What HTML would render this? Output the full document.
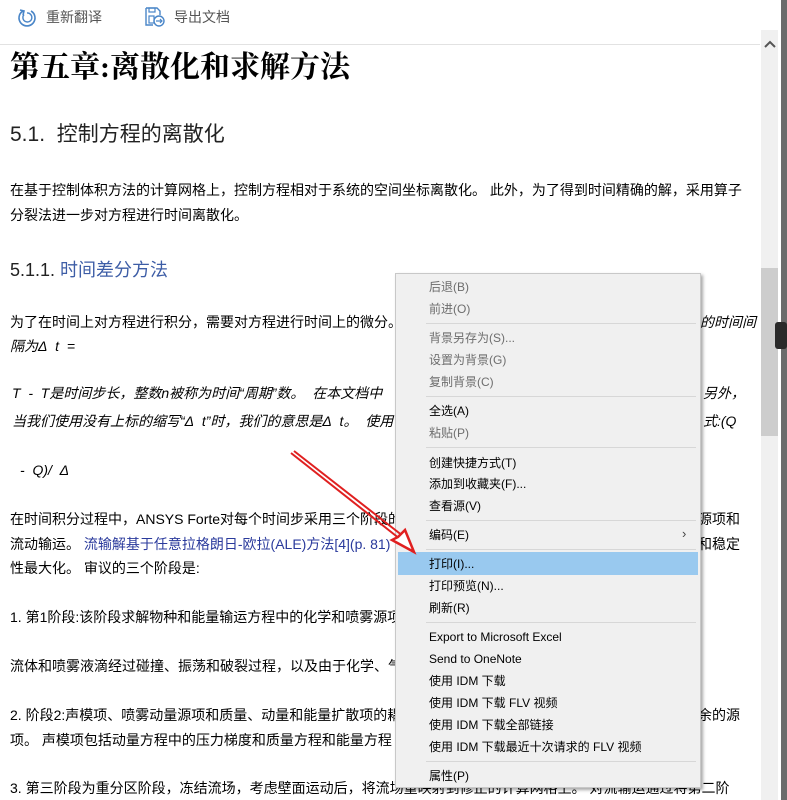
<!DOCTYPE html>
<html><head><meta charset="utf-8"><style>
*{margin:0;padding:0;box-sizing:border-box}
body{width:787px;height:800px;overflow:hidden;background:#fff;position:relative;font-family:"Liberation Sans","Noto Sans CJK SC",sans-serif;color:#000}
.a{position:absolute;white-space:nowrap;line-height:1}
.t{font-size:14px}
.i{font-style:italic;font-size:14px}
.bl{color:#2a3a9c}
#tb{position:absolute;left:0;top:0;width:760px;height:45px;border-bottom:1px solid #e2e2e2}
#sb{position:absolute;left:761px;top:30px;width:17px;height:770px;background:#f0f0f0}
#th{position:absolute;left:761px;top:268px;width:17px;height:168px;background:#cdcdcd}
#dk{position:absolute;left:781px;top:0;width:6px;height:800px;background:#6b6b6b}
#menu{position:absolute;left:395px;top:273px;width:306px;height:515px;background:#f0f0f0;border:1px solid #c8c8c8;box-shadow:2px 2px 3px rgba(0,0,0,.35);font-size:12px}
#menu .m{position:absolute;left:33px;white-space:nowrap;line-height:1;color:#000}
#menu .g{color:#6d6d6d}
#menu .s{position:absolute;left:30px;right:4px;height:1px;background:#d7d7d7}
#hl{position:absolute;left:2px;top:278px;width:300px;height:23px;background:#99c9ef}
</style></head><body>
<div id="tb"></div>
<svg class="a" style="left:16px;top:6px" width="22" height="22" viewBox="0 0 22 22"><path d="M7 5 A8 8 0 1 0 15 5" fill="none" stroke="#4a86c8" stroke-width="1.6"/><path d="M11 7 A4.5 4.5 0 1 1 8 8.5" fill="none" stroke="#4a86c8" stroke-width="1.4"/><path d="M4 4 L8 5 L7 9" fill="none" stroke="#4a86c8" stroke-width="1.6"/></svg>
<div class="a" style="left:46px;top:10px;font-size:14px;color:#555">重新翻译</div>
<svg class="a" style="left:144px;top:7px" width="22" height="20" viewBox="0 0 22 20"><path d="M2 1 H13 L16 4 V8 M2 1 V18 H9" fill="none" stroke="#4a86c8" stroke-width="1.4"/><rect x="5" y="1" width="6" height="4" fill="none" stroke="#4a86c8" stroke-width="1.2"/><rect x="5" y="9" width="5" height="7" fill="none" stroke="#4a86c8" stroke-width="1.2"/><circle cx="15" cy="14" r="5" fill="none" stroke="#4a86c8" stroke-width="1.4"/><path d="M12 14 H18 M16 12 L18 14 L16 16" fill="none" stroke="#4a86c8" stroke-width="1.2"/></svg>
<div class="a" style="left:174px;top:10px;font-size:14px;color:#555">导出文档</div>

<div class="a" style="left:10px;top:53px;font-size:30px;font-weight:bold;font-family:'Liberation Serif','Noto Serif CJK SC',serif">第五章:离散化和求解方法</div>
<div class="a" style="left:10px;top:124px;font-size:21px;color:#222">5.1.&nbsp; 控制方程的离散化</div>
<div class="a t" style="left:10px;top:183px">在基于控制体积方法的计算网格上，控制方程相对于系统的空间坐标离散化。 此外，为了得到时间精确的解，采用算子</div>
<div class="a t" style="left:10px;top:208px">分裂法进一步对方程进行时间离散化。</div>
<div class="a" style="left:10px;top:261px;font-size:18px;color:#222">5.1.1. <span style="color:#3d5da6">时间差分方法</span></div>
<div class="a t" style="left:10px;top:315px">为了在时间上对方程进行积分，需要对方程进行时间上的微分。</div>
<div class="a i" style="left:700px;top:315px">的时间间</div>
<div class="a i" style="left:10px;top:339px">隔为Δ&nbsp; t&nbsp; =</div>
<div class="a i" style="left:12px;top:386px">T&nbsp; -&nbsp; T是时间步长，整数n被称为时间“周期”数。&nbsp; 在本文档中</div>
<div class="a i" style="left:703px;top:386px">另外，</div>
<div class="a i" style="left:12px;top:414px">当我们使用没有上标的缩写“Δ&nbsp; t”时，我们的意思是Δ&nbsp; t。&nbsp; 使用</div>
<div class="a i" style="left:703px;top:414px">式:(Q</div>
<div class="a i" style="left:20px;top:463px">-&nbsp; Q)/&nbsp; Δ</div>
<div class="a t" style="left:10px;top:512px">在时间积分过程中，ANSYS Forte对每个时间步采用三个阶段的</div>
<div class="a t" style="left:698px;top:512px">源项和</div>
<div class="a t" style="left:10px;top:537px">流动输运。 <span class="bl">流输解基于任意拉格朗日-欧拉(ALE)方法[4](p. 81)</span></div>
<div class="a t" style="left:698px;top:537px">和稳定</div>
<div class="a t" style="left:10px;top:561px">性最大化。 审议的三个阶段是:</div>
<div class="a t" style="left:10px;top:610px">1. 第1阶段:该阶段求解物种和能量输运方程中的化学和喷雾源项</div>
<div class="a t" style="left:10px;top:659px">流体和喷雾液滴经过碰撞、振荡和破裂过程，以及由于化学、气</div>
<div class="a t" style="left:10px;top:708px">2. 阶段2:声模项、喷雾动量源项和质量、动量和能量扩散项的耦</div>
<div class="a t" style="left:698px;top:708px">余的源</div>
<div class="a t" style="left:10px;top:733px">项。 声模项包括动量方程中的压力梯度和质量方程和能量方程</div>
<div class="a t" style="left:10px;top:781px">3. 第三阶段为重分区阶段，冻结流场，考虑壁面运动后，将流场重映射到修正的计算网格上。 对流输运通过将第二阶</div>

<div id="sb"></div><div id="th"></div>
<svg class="a" style="left:763px;top:38px" width="14" height="12"><path d="M2 9 L7 4 L12 9" fill="none" stroke="#555" stroke-width="2"/></svg>
<div id="dk"></div>
<div class="a" style="left:775px;top:322px;width:12px;height:27px;background:#2a2a2a;border-radius:3px"></div>

<div id="menu">
<div class="m g" style="top:7px">后退(B)</div>
<div class="m g" style="top:29px">前进(O)</div>
<div class="s" style="top:49px"></div>
<div class="m g" style="top:58px">背景另存为(S)...</div>
<div class="m g" style="top:80px">设置为背景(G)</div>
<div class="m g" style="top:102px">复制背景(C)</div>
<div class="s" style="top:122px"></div>
<div class="m" style="top:131px">全选(A)</div>
<div class="m g" style="top:153px">粘贴(P)</div>
<div class="s" style="top:173px"></div>
<div class="m" style="top:183px">创建快捷方式(T)</div>
<div class="m" style="top:204px">添加到收藏夹(F)...</div>
<div class="m" style="top:226px">查看源(V)</div>
<div class="s" style="top:246px"></div>
<div class="m" style="top:255px">编码(E)</div>
<div class="a" style="left:286px;top:253px;font-size:13px;color:#444">›</div>
<div class="s" style="top:275px"></div>
<div id="hl"></div>
<div class="m" style="top:284px">打印(I)...</div>
<div class="m" style="top:306px">打印预览(N)...</div>
<div class="m" style="top:328px">刷新(R)</div>
<div class="s" style="top:348px"></div>
<div class="m" style="top:357px">Export to Microsoft Excel</div>
<div class="m" style="top:379px">Send to OneNote</div>
<div class="m" style="top:401px">使用 IDM 下载</div>
<div class="m" style="top:423px">使用 IDM 下载 FLV 视频</div>
<div class="m" style="top:445px">使用 IDM 下载全部链接</div>
<div class="m" style="top:467px">使用 IDM 下载最近十次请求的 FLV 视频</div>
<div class="s" style="top:487px"></div>
<div class="m" style="top:496px">属性(P)</div>
</div>

<svg class="a" style="left:285px;top:448px" width="135" height="110"><path d="M6 5 L115 91 M9 3 L118 88" stroke="#e02020" stroke-width="2" fill="none"/><path d="M129 104 L107 92 L113 89 L120 82 Z" fill="#fff" stroke="#e02020" stroke-width="2.5" stroke-linejoin="miter"/></svg>
</body></html>
